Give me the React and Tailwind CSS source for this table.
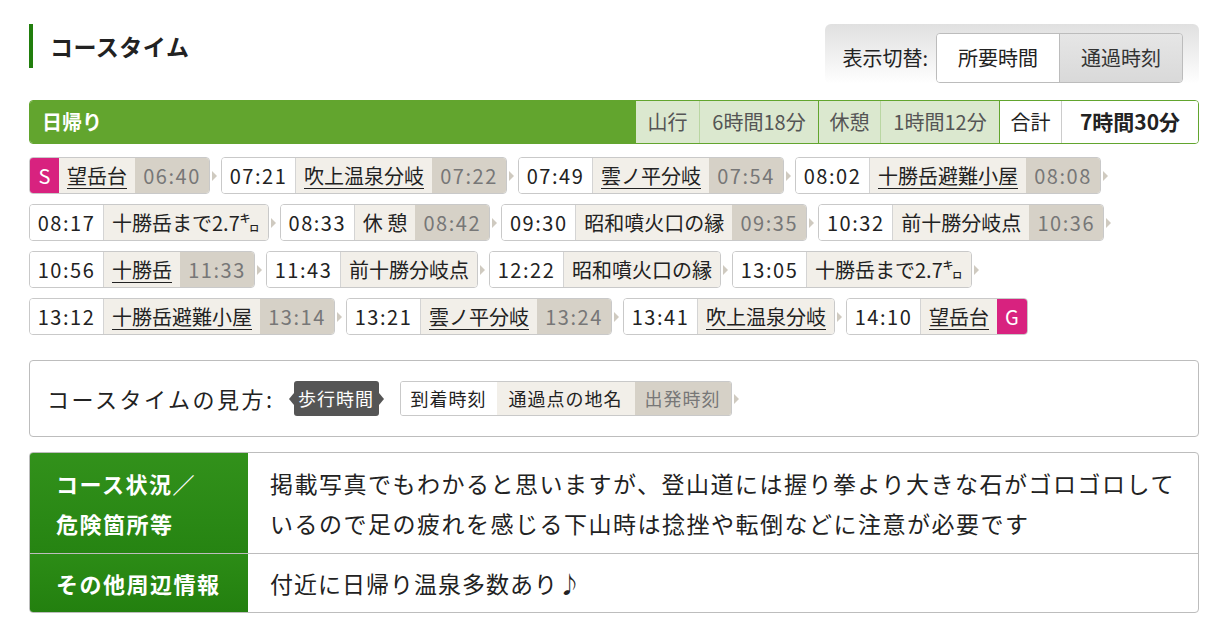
import React from "react";

const rows = [
  [
    { start: true, place: "望岳台", dep: "06:40", link: true },
    { arr: "07:21", place: "吹上温泉分岐", dep: "07:22", link: true },
    { arr: "07:49", place: "雲ノ平分岐", dep: "07:54", link: true },
    { arr: "08:02", place: "十勝岳避難小屋", dep: "08:08", link: true },
  ],
  [
    { arr: "08:17", place: "十勝岳まで2.7㌔" },
    { arr: "08:33", place: "休 憩", dep: "08:42" },
    { arr: "09:30", place: "昭和噴火口の縁", dep: "09:35" },
    { arr: "10:32", place: "前十勝分岐点", dep: "10:36" },
  ],
  [
    { arr: "10:56", place: "十勝岳", dep: "11:33", link: true },
    { arr: "11:43", place: "前十勝分岐点" },
    { arr: "12:22", place: "昭和噴火口の縁" },
    { arr: "13:05", place: "十勝岳まで2.7㌔" },
  ],
  [
    { arr: "13:12", place: "十勝岳避難小屋", dep: "13:14", link: true },
    { arr: "13:21", place: "雲ノ平分岐", dep: "13:24", link: true },
    { arr: "13:41", place: "吹上温泉分岐", link: true },
    { arr: "14:10", place: "望岳台", link: true, goal: true },
  ],
];

const Arrow = () => (
  <span className="ml-[2px] mr-[4px] h-0 w-0 border-y-[5px] border-l-[5px] border-y-transparent border-l-[#cfcac0]" />
);

const Chip = ({ arr, place, dep, link, start, goal }) => (
  <div className="flex items-center">
    <div className="flex h-[37px] items-stretch overflow-hidden rounded-[4px] border border-[#c9c9c9] text-[20px] text-[#222]">
      {start && (
        <span className="flex w-[29px] items-center justify-center bg-[#d8227f] text-white">S</span>
      )}
      {arr && (
        <span className="flex w-[74px] items-center justify-center border-r border-[#d4d4d4] bg-white tracking-[1.5px]">
          {arr}
        </span>
      )}
      <span className="flex items-center bg-[#f2efe9] px-[8px]">
        <span className={link ? "underline decoration-1 underline-offset-[4px]" : ""}>{place}</span>
      </span>
      {dep && (
        <span className="flex w-[74px] items-center justify-center bg-[#d6d1c7] tracking-[1.5px] text-[#777]">
          {dep}
        </span>
      )}
      {goal && (
        <span className="flex w-[30px] items-center justify-center bg-[#d8227f] text-white">G</span>
      )}
    </div>
    {!goal && <Arrow />}
  </div>
);

export default function App() {
  return (
    <div className="min-h-[628px] bg-white font-['Noto_Sans_CJK_JP',sans-serif] text-[#222]">
      <div className="ml-[29px] w-[1170px] pt-[24px]">
        {/* heading */}
        <div className="flex h-[60px] items-start justify-between">
          <h2 className="flex h-[44px] items-center border-l-[4px] border-[#217e0d] pl-[17px] text-[23px] font-bold leading-none tracking-[0.5px]">
            コースタイム
          </h2>
          <div className="flex h-[60px] items-start rounded-[6px] bg-linear-to-b from-[#e0e0e0] to-white pl-[17px] pr-[16px] pt-[9px]">
            <span className="mr-[8px] flex h-[50px] items-center text-[20px]">表示切替:</span>
            <div className="flex h-[50px] overflow-hidden rounded-[4px] border border-[#bcbcbc] text-[20px]">
              <span className="flex w-[122px] items-center justify-center bg-white">所要時間</span>
              <span className="flex w-[123px] items-center justify-center border-l border-[#bcbcbc] bg-linear-to-b from-[#e6e6e6] to-[#d9d9d9] text-[#333]">
                通過時刻
              </span>
            </div>
          </div>
        </div>

        {/* day bar */}
        <div className="mt-[16px] flex h-[44px] overflow-hidden rounded-[4px] border border-[#62a52e] text-[20px]">
          <div className="flex flex-1 items-center bg-[#62a52e] pl-[12px] text-[20px] font-bold text-white">日帰り</div>
          <div className="flex w-[63px] items-center justify-center bg-[#dbe8cf] text-[#555]">山行</div>
          <div className="flex w-[119px] items-center justify-center border-l border-[#b9d6a2] bg-[#dbe8cf] text-[#555]">6時間18分</div>
          <div className="flex w-[62px] items-center justify-center border-l border-[#62a52e] bg-[#dbe8cf] text-[#555]">休憩</div>
          <div className="flex w-[119px] items-center justify-center border-l border-[#b9d6a2] bg-[#dbe8cf] text-[#555]">1時間12分</div>
          <div className="flex w-[62px] items-center justify-center border-l border-[#62a52e] bg-white">合計</div>
          <div className="flex w-[137px] items-center justify-center border-l border-[#cccccc] bg-white text-[21px] font-bold">7時間30分</div>
        </div>

        {/* chips */}
        <div className="mt-[13px] flex flex-col gap-[10px]">
          {rows.map((row, i) => (
            <div key={i} className="flex items-center">
              {row.map((c, j) => (
                <Chip key={j} {...c} />
              ))}
            </div>
          ))}
        </div>

        {/* legend */}
        <div className="mt-[25px] flex h-[77px] items-center rounded-[4px] border border-[#bdbdbd] pl-[17px]">
          <span className="text-[22px] tracking-[2.5px]">コースタイムの見方:</span>
          <div className="ml-[14px] flex items-center">
            <span className="h-0 w-0 border-y-[6px] border-r-[5px] border-y-transparent border-r-[#555]" />
            <span className="flex h-[35px] w-[85px] items-center justify-center rounded-[3px] bg-[#555] text-[18px] tracking-[1px] text-white">
              歩行時間
            </span>
            <span className="h-0 w-0 border-y-[6px] border-l-[5px] border-y-transparent border-l-[#555]" />
          </div>
          <div className="ml-[16px] flex items-center">
            <div className="flex h-[35px] overflow-hidden rounded-[3px] border border-[#c9c9c9] text-[18px] tracking-[1px]">
              <span className="flex w-[96px] items-center justify-center bg-white">到着時刻</span>
              <span className="flex w-[138px] items-center justify-center bg-[#f2efe9]">通過点の地名</span>
              <span className="flex w-[96px] items-center justify-center bg-[#d6d1c7] text-[#777]">出発時刻</span>
            </div>
            <Arrow />
          </div>
        </div>

        {/* info table */}
        <div className="mt-[15px] overflow-hidden rounded-[4px] border border-[#bdbdbd]">
          <div className="flex border-b border-[#bdbdbd]">
            <div className="w-[218px] bg-linear-to-b from-[#32911b] to-[#268412] py-[10px] pl-[26px] text-[22px] font-bold leading-[40px] tracking-[1.5px] text-white">
              コース状況／
              <br />
              危険箇所等
            </div>
            <div className="flex-1 py-[10px] pl-[22px] pr-[20px] text-[23px] leading-[40px] tracking-[1.5px]">
              掲載写真でもわかると思いますが、登山道には握り拳より大きな石がゴロゴロしているので足の疲れを感じる下山時は捻挫や転倒などに注意が必要です
            </div>
          </div>
          <div className="flex h-[58px]">
            <div className="flex w-[218px] items-center bg-linear-to-b from-[#2c8c16] to-[#23800f] pl-[26px] text-[22px] font-bold tracking-[1.5px] text-white">
              その他周辺情報
            </div>
            <div className="flex flex-1 items-center pl-[22px] text-[23px] tracking-[1px]">付近に日帰り温泉多数あり♪</div>
          </div>
        </div>
      </div>
    </div>
  );
}
